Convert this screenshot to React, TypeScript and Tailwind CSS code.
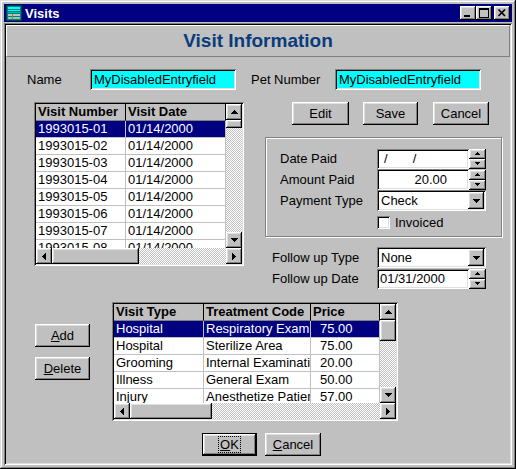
import React from "react";

const raised =
  "shadow-[inset_-1px_-1px_0_#000,inset_1px_1px_0_#fff,inset_-2px_-2px_0_#808080,inset_2px_2px_0_#dfdfdf]";
const sunken =
  "shadow-[inset_1px_1px_0_#808080,inset_-1px_-1px_0_#fff,inset_2px_2px_0_#000,inset_-2px_-2px_0_#dfdfdf]";
const checker =
  "bg-[conic-gradient(#fff_25%,#c0c0c0_0_50%,#fff_0_75%,#c0c0c0_0)] bg-[length:2px_2px]";

type Dir = "up" | "down" | "left" | "right";

function Tri({ dir, small }: { dir: Dir; small?: boolean }) {
  const a = small ? 5 : 7;
  const b = small ? 3 : 4;
  const vertical = dir === "up" || dir === "down";
  const w = vertical ? a : b;
  const h = vertical ? b : a;
  const points =
    dir === "up"
      ? `0,${b} ${a},${b} ${a / 2},0`
      : dir === "down"
        ? `0,0 ${a},0 ${a / 2},${b}`
        : dir === "left"
          ? `${b},0 ${b},${a} 0,${a / 2}`
          : `0,0 0,${a} ${b},${a / 2}`;
  return (
    <svg width={w} height={h} viewBox={`0 0 ${w} ${h}`} shapeRendering="crispEdges">
      <polygon points={points} fill="#000" />
    </svg>
  );
}

function ScrollBtn({ dir }: { dir: Dir }) {
  return (
    <div className={`flex h-[16px] w-[16px] shrink-0 items-center justify-center bg-[#c0c0c0] ${raised}`}>
      <Tri dir={dir} />
    </div>
  );
}

function VScroll({ thumb }: { thumb: string }) {
  return (
    <div className="flex w-[16px] shrink-0 flex-col">
      <ScrollBtn dir="up" />
      <div className={`${thumb} shrink-0 bg-[#c0c0c0] ${raised}`} />
      <div className={`flex-1 ${checker}`} />
      <ScrollBtn dir="down" />
    </div>
  );
}

function HScroll({ thumb }: { thumb: string }) {
  return (
    <div className="flex h-[16px] shrink-0">
      <ScrollBtn dir="left" />
      <div className={`${thumb} shrink-0 bg-[#c0c0c0] ${raised}`} />
      <div className={`flex-1 ${checker}`} />
      <ScrollBtn dir="right" />
    </div>
  );
}

type Col = { title: string; w: string; pad: string };

function Grid({
  className,
  cols,
  rows,
  bodyH,
  vThumb,
  hThumb,
}: {
  className: string;
  cols: Col[];
  rows: string[][];
  bodyH: string;
  vThumb: string;
  hThumb: string;
}) {
  return (
    <div className={`flex shrink-0 flex-col bg-[#c0c0c0] p-[2px] ${sunken} ${className}`}>
      <div className="flex">
        <div className="flex min-w-0 flex-1 flex-col bg-white">
          <div className="flex h-[17px] bg-[#c0c0c0]">
            {cols.map((c) => (
              <div
                key={c.title}
                className={`${c.w} shrink-0 overflow-hidden whitespace-nowrap border-r border-b border-r-black border-b-[#808080] px-[2px] font-bold leading-[16px]`}
              >
                {c.title}
              </div>
            ))}
          </div>
          <div className={`${bodyH} overflow-hidden`}>
            {rows.map((r, i) => (
              <div key={i} className={`flex h-[17px] ${i === 0 ? "bg-[#000080] text-white" : ""}`}>
                {r.map((cell, j) => (
                  <div
                    key={j}
                    className={`${cols[j].w} ${cols[j].pad} shrink-0 overflow-hidden whitespace-nowrap border-r border-b border-[#c0c0c0] leading-[16px]`}
                  >
                    {cell}
                  </div>
                ))}
              </div>
            ))}
          </div>
        </div>
        <VScroll thumb={vThumb} />
      </div>
      <HScroll thumb={hThumb} />
    </div>
  );
}

function Button({ className, children }: { className: string; children: React.ReactNode }) {
  return (
    <div className={`flex h-[23px] shrink-0 items-center justify-center bg-[#c0c0c0] ${raised} ${className}`}>
      {children}
    </div>
  );
}

function Spinner() {
  return (
    <div className="flex h-[20px] w-[17px] shrink-0 flex-col">
      <div className={`flex h-[10px] items-center justify-center bg-[#c0c0c0] ${raised}`}>
        <Tri dir="up" small />
      </div>
      <div className={`flex h-[10px] items-center justify-center bg-[#c0c0c0] ${raised}`}>
        <Tri dir="down" small />
      </div>
    </div>
  );
}

function Combo({ value }: { value: string }) {
  return (
    <div className={`flex h-[21px] w-[109px] items-center bg-white pl-[4px] pr-[2px] ${sunken}`}>
      <span className="flex-1">{value}</span>
      <div className={`flex h-[17px] w-[16px] items-center justify-center bg-[#c0c0c0] ${raised}`}>
        <Tri dir="down" />
      </div>
    </div>
  );
}

function AppIcon() {
  return (
    <svg width="16" height="16" viewBox="0 0 16 16" shapeRendering="crispEdges">
      <rect x="0" y="0" width="16" height="16" fill="#004040" />
      <rect x="1" y="1" width="14" height="14" fill="#008080" />
      <rect x="2" y="2" width="12" height="2" fill="#00ffff" />
      <rect x="2" y="5" width="12" height="1" fill="#00ffff" />
      <rect x="2" y="7" width="12" height="1" fill="#00c0a0" />
      <rect x="2" y="9" width="12" height="2" fill="#c0c0c0" />
      <rect x="2" y="12" width="12" height="2" fill="#a0c0a0" />
      <rect x="6" y="9" width="1" height="5" fill="#808080" />
    </svg>
  );
}

function TitleBtn({ kind, className = "" }: { kind: "min" | "max" | "close"; className?: string }) {
  return (
    <div className={`flex h-[14px] w-[16px] items-center justify-center bg-[#c0c0c0] ${raised} ${className}`}>
      <svg width="16" height="14" viewBox="0 0 16 14" shapeRendering="crispEdges">
        {kind === "min" && <rect x="4" y="9" width="6" height="2" fill="#000" />}
        {kind === "max" && (
          <>
            <rect x="3" y="2" width="9" height="9" fill="none" stroke="#000" strokeWidth="1" transform="translate(0.5 0.5)" />
            <rect x="3" y="2" width="10" height="2" fill="#000" />
          </>
        )}
        {kind === "close" && (
          <path d="M4.5 3.5 L11 10 M11 3.5 L4.5 10" stroke="#000" strokeWidth="1.7" shapeRendering="auto" />
        )}
      </svg>
    </div>
  );
}

const visits = [
  ["1993015-01", "01/14/2000"],
  ["1993015-02", "01/14/2000"],
  ["1993015-03", "01/14/2000"],
  ["1993015-04", "01/14/2000"],
  ["1993015-05", "01/14/2000"],
  ["1993015-06", "01/14/2000"],
  ["1993015-07", "01/14/2000"],
  ["1993015-08", "01/14/2000"],
];

const treatments = [
  ["Hospital", "Respiratory Exam", "75.00"],
  ["Hospital", "Sterilize Area", "75.00"],
  ["Grooming", "Internal Examination", "20.00"],
  ["Illness", "General Exam", "50.00"],
  ["Injury", "Anesthetize Patient", "57.00"],
];

export default function App() {
  return (
    <div className="h-[469px] w-[516px] bg-[#c0c0c0] p-[4px] font-['Liberation_Sans',Arial,sans-serif] text-[13px] text-black shadow-[inset_-1px_-1px_0_#000,inset_1px_1px_0_#dfdfdf,inset_-2px_-2px_0_#808080,inset_2px_2px_0_#fff]">
      {/* title bar */}
      <div className="flex h-[18px] items-center bg-[#000080] pl-[2px] pr-[2px]">
        <AppIcon />
        <span className="ml-[3px] font-bold leading-none text-white">Visits</span>
        <div className="ml-auto flex items-center">
          <TitleBtn kind="min" />
          <TitleBtn kind="max" />
          <TitleBtn kind="close" className="ml-[2px]" />
        </div>
      </div>

      {/* client area */}
      <div className={`mt-[1px] h-[442px] p-[2px] ${sunken}`}>
        <div className="flex h-[32px] items-center justify-center border border-t-white border-l-white border-b-[#808080] border-r-[#808080] text-[19px] font-bold text-[#0a3c7c]">
          Visit Information
        </div>

        {/* name row */}
        <div className="mt-[12px] flex h-[21px] items-center pl-[21px]">
          <span className="w-[63px] shrink-0">Name</span>
          <div className={`flex h-[21px] w-[146px] shrink-0 items-center bg-[#00ffff] pl-[4px] ${sunken}`}>
            MyDisabledEntryfield
          </div>
          <span className="ml-[15px] w-[84px] shrink-0">Pet Number</span>
          <div className={`flex h-[21px] w-[146px] shrink-0 items-center bg-[#00ffff] pl-[4px] ${sunken}`}>
            MyDisabledEntryfield
          </div>
        </div>

        {/* main row */}
        <div className="mt-[12px] flex items-start">
          <Grid
            className="ml-[28px] h-[164px] w-[210px]"
            cols={[
              { title: "Visit Number", w: "w-[90px]", pad: "pl-[2px]" },
              { title: "Visit Date", w: "w-[100px]", pad: "pl-[2px]" },
            ]}
            rows={visits}
            bodyH="h-[127px]"
            vThumb="h-[8px]"
            hThumb="w-[87px]"
          />

          <div className="ml-[21px] flex w-[237px] flex-col">
            <div className="flex">
              <Button className="ml-[27px] h-[22px] w-[57px]">Edit</Button>
              <Button className="ml-[14px] h-[22px] w-[55px]">Save</Button>
              <Button className="ml-[15px] h-[22px] w-[56px]">Cancel</Button>
            </div>

            <div className="mt-[12px] h-[100px] border border-[#808080] pl-[14px] pt-[10px] shadow-[inset_1px_1px_0_#fff,1px_1px_0_#fff]">
              <div className="flex h-[21px] items-center">
                <span className="w-[97px] shrink-0">Date Paid</span>
                <div className={`flex h-[20px] w-[92px] items-center bg-white pl-[3px] ${sunken}`}>
                  <span className="ml-[4px]">/</span>
                  <span className="ml-[25px]">/</span>
                </div>
                <Spinner />
              </div>
              <div className="flex h-[21px] items-center">
                <span className="w-[97px] shrink-0">Amount Paid</span>
                <div className={`flex h-[21px] w-[92px] items-center justify-end bg-white pr-[22px] ${sunken}`}>
                  20.00
                </div>
                <Spinner />
              </div>
              <div className="flex h-[21px] items-center">
                <span className="w-[97px] shrink-0">Payment Type</span>
                <Combo value="Check" />
              </div>
              <div className="mt-[5px] flex h-[13px] items-center pl-[97px]">
                <div className={`h-[13px] w-[13px] bg-white ${sunken}`} />
                <span className="ml-[5px]">Invoiced</span>
              </div>
            </div>

            <div className="mt-[10px] pl-[7px]">
              <div className="flex h-[21px] items-center">
                <span className="w-[105px] shrink-0">Follow up Type</span>
                <Combo value="None" />
              </div>
              <div className="flex h-[21px] items-center">
                <span className="w-[105px] shrink-0">Follow up Date</span>
                <div className={`flex h-[20px] w-[92px] items-center bg-white pl-[3px] ${sunken}`}>
                  01/31/2000
                </div>
                <Spinner />
              </div>
            </div>
          </div>
        </div>

        {/* lower row */}
        <div className="mt-[13px] flex items-start">
          <div className="ml-[29px] flex w-[55px] flex-col">
            <Button className="mt-[22px] w-[55px]">
              <span>
                <span className="underline">A</span>dd
              </span>
            </Button>
            <Button className="mt-[10px] w-[55px]">
              <span>
                <span className="underline">D</span>elete
              </span>
            </Button>
          </div>
          <Grid
            className="ml-[22px] h-[119px] w-[286px]"
            cols={[
              { title: "Visit Type", w: "w-[90px]", pad: "pl-[2px]" },
              { title: "Treatment Code", w: "w-[107px]", pad: "pl-[2px]" },
              { title: "Price", w: "w-[69px]", pad: "pl-[9px]" },
            ]}
            rows={treatments}
            bodyH="h-[82px]"
            vThumb="h-[21px]"
            hThumb="w-[82px]"
          />
        </div>

        {/* ok / cancel */}
        <div className="mt-[12px] flex">
          <div className="ml-[196px] h-[23px] w-[55px] border border-black">
            <div className={`flex h-full w-full items-center justify-center bg-[#c0c0c0] ${raised}`}>
              <span className="border border-dotted border-black px-[1px] leading-[15px]">
                <span className="underline">O</span>K
              </span>
            </div>
          </div>
          <Button className="ml-[8px] w-[56px]">
            <span>
              <span className="underline">C</span>ancel
            </span>
          </Button>
        </div>
      </div>
    </div>
  );
}
